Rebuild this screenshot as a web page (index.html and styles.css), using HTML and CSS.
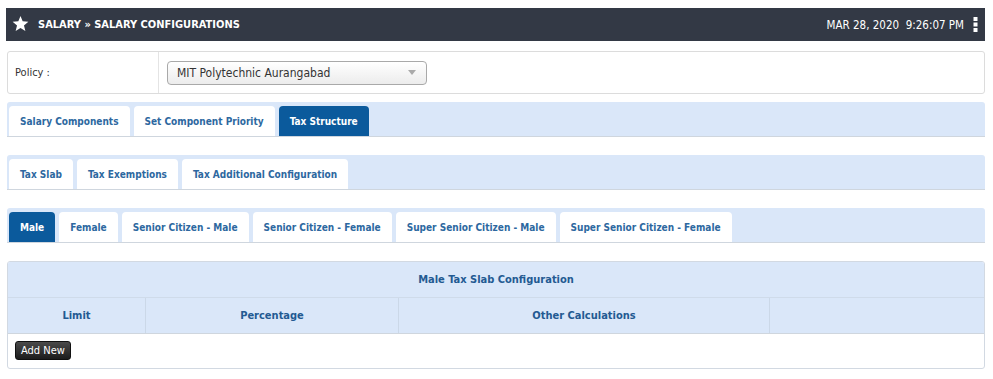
FILE: index.html
```html
<!DOCTYPE html>
<html lang="en">

<head>
    <meta charset="UTF-8">
    <title>Salary Configurations</title>
    <link rel="stylesheet" href="styles.css">
</head>

<body>
    <div class="page">
        <div class="topbar">
            <div class="crumb">
                <svg class="star" width="17" height="16" viewBox="0 0 24 23">
                    <path d="M12 0l3.1 7.6 8.2.6-6.3 5.3 2 8-7-4.4-7 4.4 2-8L.7 8.2l8.2-.6z" fill="#fff" />
                </svg>
                <span>SALARY &raquo; SALARY CONFIGURATIONS</span>
            </div>
            <div class="clock">
                <span>MAR 28, 2020&nbsp;&nbsp;9:26:07 PM</span>
                <svg width="5" height="15" viewBox="0 0 5 15">
                    <rect x="0.5" y="0" width="4" height="4" fill="#fff" />
                    <rect x="0.5" y="5.5" width="4" height="4" fill="#fff" />
                    <rect x="0.5" y="11" width="4" height="4" fill="#fff" />
                </svg>
            </div>
        </div>

        <div class="policy">
            <div class="policy-label">Policy :</div>
            <div class="policy-field">
                <div class="select">
                    <span>MIT Polytechnic Aurangabad</span>
                    <span class="caret"></span>
                </div>
            </div>
        </div>

        <div class="tabbar">
            <a class="tab">Salary Components</a>
            <a class="tab">Set Component Priority</a>
            <a class="tab active">Tax Structure</a>
        </div>

        <div class="tabbar">
            <a class="tab">Tax Slab</a>
            <a class="tab">Tax Exemptions</a>
            <a class="tab">Tax Additional Configuration</a>
        </div>

        <div class="tabbar">
            <a class="tab active">Male</a>
            <a class="tab">Female</a>
            <a class="tab">Senior Citizen - Male</a>
            <a class="tab">Senior Citizen - Female</a>
            <a class="tab">Super Senior Citizen - Male</a>
            <a class="tab">Super Senior Citizen - Female</a>
        </div>

        <div class="slab">
            <div class="slab-title">Male Tax Slab Configuration</div>
            <div class="slab-head">
                <div>Limit</div>
                <div>Percentage</div>
                <div>Other Calculations</div>
                <div></div>
            </div>
            <div class="slab-body">
                <button class="btn-dark">Add New</button>
            </div>
        </div>
    </div>
</body>

</html>
```

FILE: styles.css
```css
body {
    margin: 0;
    background: #fff;
    font-family: "DejaVu Sans Condensed", "DejaVu Sans", sans-serif;
    font-size: 11px;
    color: #333;
}

.page {
    width: 979px;
    margin: 8px 0 0 6px;
}

.topbar {
    height: 33px;
    background: #333945;
    color: #fff;
    display: flex;
    align-items: center;
    justify-content: space-between;
    padding: 0 7px 0 6px;
    box-sizing: border-box;
}

.crumb {
    display: flex;
    align-items: center;
    gap: 9px;
    font-weight: bold;
    font-size: 11px;
}

.star {
    margin-top: -2px;
}

.clock {
    display: flex;
    align-items: center;
    gap: 9px;
    font-size: 11.5px;
}

.policy {
    display: flex;
    margin: 10px 0 0 1px;
    height: 43px;
    border: 1px solid #dcdcdc;
    border-radius: 3px;
    box-sizing: border-box;
}

.policy-label {
    width: 151px;
    padding-left: 7px;
    border-right: 1px solid #e4e4e4;
    display: flex;
    align-items: center;
    box-sizing: border-box;
}

.policy-field {
    padding-left: 8px;
    display: flex;
    align-items: center;
}

.select {
    width: 260px;
    height: 24px;
    box-sizing: border-box;
    border: 1px solid #a9a9a9;
    border-radius: 4px;
    background: linear-gradient(#fff, #ececec);
    display: flex;
    align-items: center;
    justify-content: space-between;
    padding: 0 10px 0 9px;
    font-size: 12px;
    color: #333;
}

.caret {
    width: 0;
    height: 0;
    border-left: 4px solid transparent;
    border-right: 4px solid transparent;
    border-top: 5px solid #aaa;
}

.tabbar {
    display: flex;
    gap: 4px;
    align-items: flex-end;
    margin: 8px 0 0 1px;
    height: 35px;
    padding: 0 2px;
    background: #dae7f9;
    border-bottom: 1px solid #cfd6de;
    border-radius: 3px 3px 0 0;
    box-sizing: border-box;
}

.tabbar + .tabbar {
    margin-top: 18px;
}

.tab {
    height: 30px;
    display: flex;
    align-items: center;
    padding: 0 11px;
    background: #fff;
    border-radius: 4px 4px 0 0;
    color: #2d68a0;
    font-weight: bold;
    font-size: 10px;
    white-space: nowrap;
}

.tab.active {
    background: #0b5a9c;
    color: #fff;
}

.slab {
    margin: 18px 0 0 1px;
    border: 1px solid #d2d9e2;
    border-radius: 3px;
    overflow: hidden;
}

.slab-title {
    height: 35px;
    background: #dae7f9;
    color: #235a92;
    font-weight: bold;
    display: flex;
    align-items: center;
    justify-content: center;
    border-bottom: 1px solid #cfdbea;
}

.slab-head {
    display: grid;
    grid-template-columns: 137px 253px 371px 1fr;
    height: 35px;
    background: #dae7f9;
    color: #235a92;
    font-weight: bold;
    border-bottom: 1px solid #cfd6de;
}

.slab-head div {
    display: flex;
    align-items: center;
    justify-content: center;
    border-left: 1px solid #cbd8e8;
}

.slab-head div:first-child {
    border-left: none;
}

.slab-body {
    height: 34px;
    padding: 7px 0 0 7px;
    box-sizing: border-box;
}

.btn-dark {
    height: 19px;
    padding: 0 5px;
    border: 1px solid #111;
    border-radius: 3px;
    background: linear-gradient(#4a4a4a, #1c1c1c);
    color: #fff;
    font-family: inherit;
    font-size: 11px;
}
```
